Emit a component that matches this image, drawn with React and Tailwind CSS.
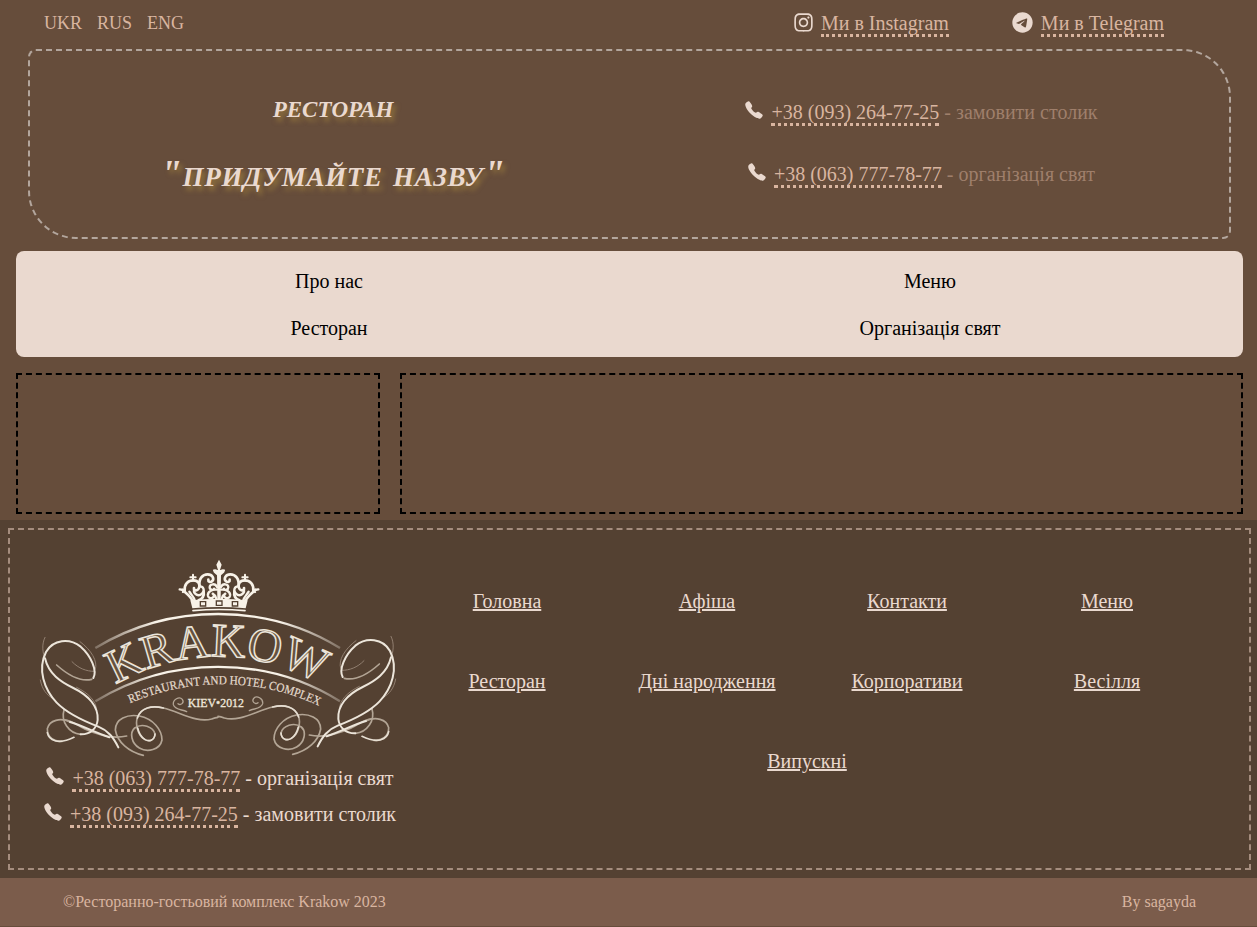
import { FaInstagram } from "react-icons/fa";
import { FaTelegram } from "react-icons/fa6";
import { IoCall } from "react-icons/io5";

const dotted = "border-b-[3px] border-dotted border-[#d9b5a0] text-[#d9b5a0]";

function Phone({ number, note, noteClass }) {
  return (
    <p className="flex items-center justify-center whitespace-pre">
      <IoCall size={20} className="relative -top-[2px] mr-[7px] shrink-0 text-[#ead9cf]" />
      <span>
        <a className={dotted}>{number}</a>
        <span className={noteClass}> - {note}</span>
      </span>
    </p>
  );
}

function CrownHalf() {
  return (
    <g>
      <path strokeWidth="8" d="M68 138C62 124 50 116 38 105" />
      <path strokeWidth="7" d="M29 103l12 2-2 6" />
      <path strokeWidth="8" d="M44 108C42 88 54 76 70 76c16 0 22 14 16 25-5 8-15 6-14-2" />
      <path strokeWidth="7" d="M72 104c-2 14 14 22 24 12 10-9 4-22-6-22M74 136c-2-10-10-16-16-26" />
      <path strokeWidth="8" d="M88 94C86 70 98 58 113 58c15 0 20 13 14 20-6 6-13 2-12-4" />
      <path strokeWidth="7" d="M141 96c-5-12-22-10-22 1 0 8 10 10 13 4M141 104c-14-2-30 6-27 19 3 10 18 8 17-1M140 134c-3-8-4-14-12-18" />
      <path strokeWidth="8" d="M86 136c14-6 17-14 15-26" />
      <path strokeWidth="6" d="M69 59v18M61 67h16" />
      <path strokeWidth="6" d="M147 64c-4-8-14-10-15-18 6-2 10 2 13 8" />
    </g>
  );
}

function Crown() {
  return (
    <g transform="translate(420 15)" stroke="#f8f2e8" fill="none" strokeLinecap="round">
      <CrownHalf />
      <g transform="translate(294 0) scale(-1 1)">
        <CrownHalf />
      </g>
      <path fill="#f8f2e8" stroke="none" d="M147 14l8 15-5 16h12l-9 12-1 78h-10l-1-78-9-12h12l-5-16z" />
      <path fill="#f8f2e8" stroke="none" d="M61 136Q147 127 233 136L227 160Q147 152 67 160Z" />
      <path strokeWidth="5" d="M69 167Q147 160 225 167" />
      <path fill="#f8f2e8" stroke="#544132" strokeWidth="4" d="M91 140h16v13H91zM139 138h17v13h-17zM187 140h16v13h-16z" />
    </g>
  );
}

function Flourish() {
  return (
    <g fill="none" strokeLinecap="round">
      <g strokeWidth="3" stroke="#917f70">
        <path d="M45 262C34 284 38 310 46 330M126 335C146 356 170 364 192 364M150 275C184 300 204 334 196 358" />
        <path d="M31 390C36 418 50 436 70 446M140 412C176 430 198 452 200 480" />
      </g>
      <g strokeWidth="5" stroke="#b3a595">
        <path d="M80 345C110 372 150 396 185 388" />
        <path d="M152 553C116 550 92 514 102 480" />
        <path d="M120 516C92 502 58 510 52 536C52 564 74 576 96 574" />
        <path d="M290 558C248 568 206 556 166 538C140 526 126 510 104 510" />
        <path d="M340 616C296 606 262 576 256 540C256 506 292 492 328 498C370 506 396 540 396 570C390 600 352 608 328 594C304 580 298 548 314 534C336 518 370 530 375 552C374 572 356 576 344 568C322 556 316 520 322 504C332 472 366 466 400 474C450 486 500 520 545 507Q556 502 564 502" />
      </g>
      <g strokeWidth="6" stroke="#ece5da">
        <path d="M190 384C202 362 184 318 152 290C118 264 70 268 48 306C22 358 42 418 80 458C112 491 158 512 205 530C235 542 250 562 265 592" />
        <path d="M45 325C56 372 92 396 130 414C176 436 206 470 203 510C200 538 178 554 152 553" />
        <path d="M238 562C196 548 160 528 120 516" />
      </g>
      <path stroke="#e6ded2" strokeWidth="5" d="M375 552C374 572 356 576 344 568C332 560 326 548 323 534M52 548C56 570 84 586 132 562M322 504C332 472 366 466 400 474" />
      <path strokeWidth="4" stroke="#b3a595" d="M470 485C456 478 434 480 430 464C428 448 448 438 457 448C464 458 452 468 444 461" />
    </g>
  );
}

function Logo() {
  return (
    <svg className="block h-[197px] w-[357px] overflow-visible" viewBox="30 30 1071 591" fontFamily="'Liberation Serif', serif">
      <defs>
        <linearGradient id="arc" gradientUnits="userSpaceOnUse" x1="190" x2="938" y1="0" y2="0">
          <stop offset="0" stopColor="#f8f2e8" stopOpacity="0.25" />
          <stop offset="0.25" stopColor="#f8f2e8" />
          <stop offset="0.75" stopColor="#f8f2e8" />
          <stop offset="1" stopColor="#f8f2e8" stopOpacity="0.25" />
        </linearGradient>
        <path id="name" d="M257 404A606 606 0 0 1 890 414" />
        <path id="tagline" d="M300 460A690 690 0 0 1 900 484" />
      </defs>
      <Crown />
      <g fill="none" stroke="url(#arc)" strokeWidth="7">
        <path d="M196 294C420 158 710 158 930 294" />
        <path d="M196 454C420 316 710 316 930 454" />
      </g>
      <text fontSize="143" fill="#65513f" stroke="#ece5da" strokeWidth="4.500">
        <textPath href="#name" textLength="640" lengthAdjust="spacingAndGlyphs">
          KRAKOW
        </textPath>
      </text>
      <text fontSize="37" fill="#e5dccf" stroke="#e5dccf" strokeWidth="0.600">
        <textPath href="#tagline" textLength="584" lengthAdjust="spacingAndGlyphs">
          RESTAURANT AND HOTEL COMPLEX
        </textPath>
      </text>
      <text x="473" y="471" fontSize="38" fill="#eee6da" stroke="#eee6da" strokeWidth="1" textLength="169" lengthAdjust="spacingAndGlyphs">
        KIEV•2012
      </text>
      <Flourish />
      <g transform="translate(1128 -3) scale(-1 1)">
        <Flourish />
      </g>
    </svg>
  );
}

const links = ["Головна", "Афіша", "Контакти", "Меню", "Ресторан", "Дні народження", "Корпоративи", "Весілля", "Випускні"];

export default function App() {
  return (
    <div className="flex h-[927px] w-[1257px] flex-col overflow-hidden bg-[#664d3b] font-['Liberation_Serif',serif] text-[20px] leading-[24px] text-[#ead9cf]">
      <header className="flex h-[49px] shrink-0 items-start justify-between pt-[11px] pr-[93px] pl-[44px]">
        <nav className="flex gap-[15px] text-[18px] text-[#d9b5a0]">
          <a>UKR</a>
          <a>RUS</a>
          <a>ENG</a>
        </nav>
        <div className="flex">
          <p className="mr-[63px] flex items-center gap-[7px]">
            <FaInstagram size={21} className="relative -top-px" />
            <span>
              <a className={dotted}>Ми в Instagram</a>
            </span>
          </p>
          <p className="flex items-center gap-[8px]">
            <FaTelegram size={21} className="relative -top-px" />
            <span>
              <a className={dotted}>Ми в Telegram</a>
            </span>
          </p>
        </div>
      </header>

      <section className="ml-[28px] grid h-[190px] w-[1203px] shrink-0 grid-cols-2 rounded-[8px_48px_8px_48px] border-2 border-dashed border-[#b3a69d] pr-[14px] pl-[9px]">
        <div className="pt-[31px] text-center font-bold italic [font-variant:small-caps] [text-shadow:3px_4px_5px_#b8963e90]">
          <h2 className="text-[32.600px] leading-[48px]">ресторан</h2>
          <h1 className="mt-[17px] text-[38.400px] leading-[52px] tracking-[0.700px]">"придумайте назву"</h1>
        </div>
        <div className="flex flex-col gap-[38px] pt-[49px]">
          <Phone number="+38 (093) 264-77-25" note="замовити столик" noteClass="text-[#9f7f6b]" />
          <Phone number="+38 (063) 777-78-77" note="організація свят" noteClass="text-[#9f7f6b]" />
        </div>
      </section>

      <nav className="mx-[16px] mt-[12px] grid h-[106px] w-[1227px] shrink-0 grid-cols-[626px_576px] grid-rows-2 items-center rounded-[8px] bg-[#ead9cf] py-[6px] text-center text-black">
        <a>Про нас</a>
        <a>Меню</a>
        <a>Ресторан</a>
        <a>Організація свят</a>
      </nav>

      <main className="mx-[16px] mt-[16px] flex h-[141px] w-[1227px] shrink-0 gap-[20px]">
        <aside className="w-[364px] border-2 border-dashed border-black" />
        <section className="flex-1 border-2 border-dashed border-black" />
      </main>

      <footer className="mt-[6px] h-[358px] shrink-0 bg-[#544132] p-[8px]">
        <div className="flex h-[342px] w-[1243px] border-2 border-dashed border-[#a58d7e] pt-[30px] pl-[30px]">
          <div className="w-[359px]">
            <Logo />
            <div className="mt-[9px] flex flex-col gap-[12px]">
              <Phone number="+38 (063) 777-78-77" note="організація свят" noteClass="" />
              <Phone number="+38 (093) 264-77-25" note="замовити столик" noteClass="" />
            </div>
          </div>
          <nav className="mt-px ml-[8px] flex h-[240px] w-[800px] flex-wrap justify-center">
            {links.map((l) => (
              <a key={l} className="flex h-[80px] w-[200px] items-center justify-center underline">
                {l}
              </a>
            ))}
          </nav>
        </div>
      </footer>

      <div className="flex h-[48px] shrink-0 items-center justify-between bg-[#7b5c4b] pr-[61px] pl-[63px] text-[16px] text-[#d9b5a0]">
        <p>©Ресторанно-гостьовий комплекс Krakow 2023</p>
        <p>By sagayda</p>
      </div>
    </div>
  );
}
